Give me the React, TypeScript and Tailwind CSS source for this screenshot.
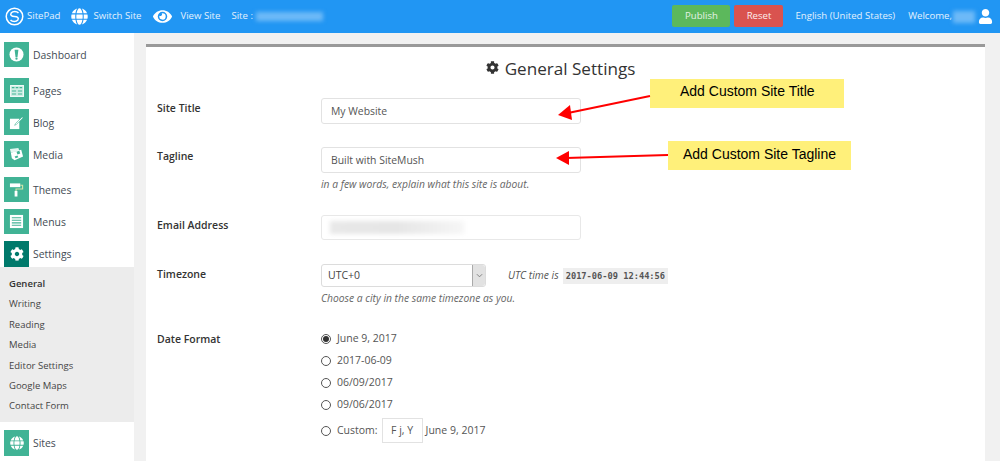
import { FaCog, FaEye, FaGlobe, FaUser } from "react-icons/fa"
import type { ReactNode } from "react"

const font = { fontFamily: '"Open Sans", sans-serif' }

function Dashboard() {
  return (
    <svg viewBox="0 0 16 16" className="w-[15px] h-[15px]">
      <circle cx="8" cy="8" r="7.5" fill="#fff" />
      <path d="M6 3h4l-1 8H7z" fill="#41b395" />
      <circle cx="8" cy="12.500" r="1.200" fill="#41b395" />
    </svg>
  )
}

function PagesIcon() {
  return (
    <svg viewBox="0 0 16 14" className="w-[14px] h-[12px]">
      <rect x="0.5" y="0.5" width="15" height="13" fill="#cfeee5" stroke="#fff" />
      <path d="M2 3h3M6.500 3h3M11 3h3M2 7h5M9 7h5M2 10.500h5M9 10.500h5" stroke="#41b395" strokeWidth="1.400" />
    </svg>
  )
}

function BlogIcon() {
  return (
    <svg viewBox="0 0 16 16" className="w-[15px] h-[15px]">
      <path d="M1 4h10v11H1z" fill="#fff" />
      <path d="M7 9l7-7 1 1-7 7-2 1z" fill="#fff" stroke="#41b395" strokeWidth="0.600" />
    </svg>
  )
}

function MediaIcon() {
  return (
    <svg viewBox="0 0 16 16" className="w-[15px] h-[15px]">
      <path d="M1 2l9-1 1 3-9 2z" fill="#e4f6f0" />
      <path d="M2 6l11-3 2 7-9 4-3-2z" fill="#fff" />
      <path d="M8 5l3-1 1 3-3 1zM6 10l3-1 1 2-3 1z" fill="#41b395" />
    </svg>
  )
}

function RollerIcon() {
  return (
    <svg viewBox="0 0 16 16" className="w-[15px] h-[15px]">
      <rect x="1" y="1.500" width="11" height="4" fill="#fff" />
      <path d="M12 3.500h2.500v4H7.500V10" fill="none" stroke="#cfe3a8" strokeWidth="1.200" />
      <rect x="6" y="9.500" width="3" height="6" fill="#fff" />
    </svg>
  )
}

function MenusIcon() {
  return (
    <svg viewBox="0 0 16 16" className="w-[15px] h-[15px]">
      <rect x="1" y="1" width="14" height="14" fill="#fff" />
      <path d="M3 4h10M3 6.700h10M3 9.400h10M3 12h10" stroke="#41b395" strokeWidth="1.200" />
    </svg>
  )
}

function Logo() {
  return (
    <svg viewBox="0 0 20 20" className="w-[19px] h-[19px] shrink-0">
      <circle cx="10" cy="10" r="8.700" fill="none" stroke="#fff" strokeWidth="1.600" />
      <path
        d="M14.200 6.400C12.300 4.300 8.200 4.300 6.500 6.400c-1.300 1.800.3 3.600 3.500 3.600 3.300 0 4.800 1.800 3.500 3.600-1.700 2.100-5.800 2.100-7.700 0"
        fill="none"
        stroke="#fff"
        strokeWidth="1.600"
      />
    </svg>
  )
}

const topItems: { label: string; icon: ReactNode; box: string; text: string; active?: boolean }[] = [
  { label: "Dashboard", icon: <Dashboard />, box: "mt-[9px] h-[25px]", text: "pt-[2px]" },
  { label: "Pages", icon: <PagesIcon />, box: "mt-[11px] h-[25px]", text: "pt-[2px]" },
  { label: "Blog", icon: <BlogIcon />, box: "mt-[6px] h-[26px]", text: "pt-[4px]" },
  { label: "Media", icon: <MediaIcon />, box: "mt-[6px] h-[26px]", text: "pt-[4px]" },
  { label: "Themes", icon: <RollerIcon />, box: "mt-[10px] h-[25px]", text: "pt-[2px]" },
  { label: "Menus", icon: <MenusIcon />, box: "mt-[7px] h-[25px]", text: "pt-[2px]" },
  {
    label: "Settings",
    icon: <FaCog className="text-white text-[14px]" />,
    box: "mt-[7px] h-[26px]",
    text: "pt-[2px]",
    active: true,
  },
]

const subItems = ["General", "Writing", "Reading", "Media", "Editor Settings", "Google Maps", "Contact Form"]

function SideItem({
  label,
  icon,
  box,
  text,
  active,
}: {
  label: string
  icon: ReactNode
  box: string
  text: string
  active?: boolean
}) {
  return (
    <div className={`flex items-center pl-[4px] ${box}`}>
      <div className={`w-[25px] h-full flex items-center justify-center ${active ? "bg-[#00796b]" : "bg-[#41b395]"}`}>
        {icon}
      </div>
      <span className={`ml-[4px] text-[10.400px] text-[#444c55] ${text}`}>{label}</span>
    </div>
  )
}

function Label({ children }: { children: ReactNode }) {
  return <div className="w-[164px] shrink-0 text-[10.500px] font-semibold text-[#333]">{children}</div>
}

function Radio({ checked, text, mt }: { checked?: boolean; text: string; mt: string }) {
  return (
    <div className={`flex items-center h-[16px] ${mt}`}>
      <span className="w-[10px] h-[10px] rounded-full border border-[#555] flex items-center justify-center">
        {checked && <span className="w-[6px] h-[6px] rounded-full bg-[#333]" />}
      </span>
      <span className="ml-[6px] text-[10.500px] text-[#555]">{text}</span>
    </div>
  )
}

export default function App() {
  return (
    <div className="relative w-[1000px] h-[461px] overflow-hidden bg-[#f1f1f1]" style={font}>
      {/* Top bar */}
      <header className="h-[33px] bg-[#2196f3] flex items-center pl-[5px] text-[9.600px] text-[#e3f1fd]">
        <Logo />
        <span className="ml-[3px]">SitePad</span>
        <FaGlobe className="ml-[11px] text-white text-[17px]" />
        <span className="ml-[5px]">Switch Site</span>
        <FaEye className="ml-[12px] text-white text-[19px]" />
        <span className="ml-[8px]">View Site</span>
        <span className="ml-[11px]">Site :</span>
        <div className="ml-[3px] w-[67px] h-[9px] bg-[#6db9f7] blur-[2px]" />
        <div className="ml-auto flex items-center">
          <div className="w-[58px] h-[22px] mb-[1px] rounded-[2px] bg-[#5cb85c] flex items-center justify-center text-[#e6f3e6]">
            Publish
          </div>
          <div className="ml-[4px] w-[49px] h-[22px] mb-[1px] rounded-[2px] bg-[#d9534f] flex items-center justify-center text-[#fdeeee]">
            Reset
          </div>
          <span className="ml-[12px]">English (United States)</span>
          <span className="ml-[13px]">Welcome,</span>
          <div className="ml-[1px] w-[22px] h-[12px] bg-[#6db9f7] blur-[2px]" />
          <FaUser className="ml-[3px] mr-[7px] text-white text-[15px]" />
        </div>
      </header>

      <div className="flex h-[428px]">
        {/* Sidebar */}
        <aside className="w-[134px] shrink-0 bg-white">
          {topItems.map((item) => (
            <SideItem key={item.label} {...item} />
          ))}
          <div className="h-[155px] bg-[#ececec] pt-[7px] pl-[9px] text-[9.500px] leading-[20.400px] text-[#444]">
            {subItems.map((s, i) => (
              <div key={s} className={i === 0 ? "font-semibold text-[#333]" : ""}>
                {s}
              </div>
            ))}
          </div>
          <SideItem
            label="Sites"
            icon={<FaGlobe className="text-white text-[14px]" />}
            box="mt-[8px] h-[26px]"
            text="pt-[2px]"
          />
        </aside>

        {/* General settings panel */}
        <main className="ml-[12px] mt-[11px] w-[839px] bg-white border-t-[3px] border-[#999] pl-[11px]">
          <h1 className="flex items-center justify-center gap-[6px] h-[20px] mt-[12px] pr-[21px] text-[17.100px] text-[#333]">
            <FaCog className="text-[13px] mb-[4px]" />
            General Settings
          </h1>
          <div className="flex items-center h-[26px] mt-[19px]">
            <Label>
              <span className="relative -top-[2px]">Site Title</span>
            </Label>
            <div className="w-[260px] h-[26px] border border-[#e2e2e2] rounded-[3px] pl-[9px] pt-[2px] flex items-center text-[10.400px] text-[#555]">
              My Website
            </div>
          </div>
          <div className="flex items-center h-[26px] mt-[23px]">
            <Label>
              <span className="relative -top-[3px]">Tagline</span>
            </Label>
            <div className="w-[260px] h-[26px] border border-[#e2e2e2] rounded-[3px] pl-[9px] pt-[2px] flex items-center text-[10.400px] text-[#555]">
              Built with SiteMush
            </div>
          </div>
          <p className="ml-[164px] mt-[4px] h-[14px] leading-[14px] text-[10.300px] italic text-[#666]">
            in a few words, explain what this site is about.
          </p>
          <div className="flex items-center h-[25px] mt-[24px]">
            <Label>
              <span className="relative -top-[2px]">Email Address</span>
            </Label>
            <div className="w-[260px] h-[25px] border border-[#e8e8e8] rounded-[3px] pl-[8px] flex items-center">
              <div className="w-[134px] h-[13px] bg-linear-to-r from-[#e8e8e8] via-[#e6e6e6] to-[#f6f6f6] blur-[2px]" />
            </div>
          </div>
          <div className="flex items-center h-[23px] mt-[24px]">
            <Label>
              <span className="relative -top-[1px]">Timezone</span>
            </Label>
            <div className="w-[165px] h-[23px] border border-[#dcdcdc] rounded-[3px] pl-[6px] flex items-center justify-between text-[10.500px] text-[#444]">
              UTC+0
              <div className="w-[13px] h-full bg-[#e2e2e2] border-l border-[#aaa] rounded-r-[3px] flex items-center justify-center">
                <svg viewBox="0 0 8 5" className="w-[7px] h-[5px]">
                  <path d="M1 1l3 3 3-3" fill="none" stroke="#777" strokeWidth="1" />
                </svg>
              </div>
            </div>
            <span className="ml-[22px] text-[10.300px] italic text-[#555]">UTC time is</span>
            <code
              className="ml-[4px] px-[3px] h-[16px] leading-[16px] bg-[#eee] text-[8.700px] font-bold text-[#555]"
              style={{ fontFamily: '"DejaVu Sans Mono", monospace' }}
            >
              2017-06-09 12:44:56
            </code>
          </div>
          <p className="ml-[164px] mt-[4px] h-[14px] leading-[14px] text-[10.300px] italic text-[#666]">
            Choose a city in the same timezone as you.
          </p>
          <div className="flex mt-[25px]">
            <Label>
              <span className="relative top-[2px]">Date Format</span>
            </Label>
            <div className="pt-[1px]">
              <Radio checked text="June 9, 2017" mt="mt-0" />
              <Radio text="2017-06-09" mt="mt-[6px]" />
              <Radio text="06/09/2017" mt="mt-[6px]" />
              <Radio text="09/06/2017" mt="mt-[6px]" />
              <div className="flex items-center h-[25px] mt-[5px] text-[10.500px] text-[#555]">
                <span className="w-[10px] h-[10px] rounded-full border border-[#555]" />
                <span className="ml-[6px]">Custom:</span>
                <div className="ml-[4px] w-[41px] h-[25px] border border-[#e2e2e2] flex items-center justify-center">
                  F j, Y
                </div>
                <span className="ml-[3px]">June 9, 2017</span>
              </div>
            </div>
          </div>
        </main>
      </div>

      {/* Annotations laid over the screenshot */}
      <div
        className="absolute left-[650px] top-[79px] w-[194px] h-[29px] bg-[#fff07a] pl-[30px] pt-[2px] text-[14px] text-black"
        style={{ fontFamily: '"Liberation Sans", sans-serif' }}
      >
        Add Custom Site Title
      </div>
      <div
        className="absolute left-[668px] top-[141px] w-[183px] h-[29px] bg-[#fff07a] pl-[15px] pt-[3px] text-[14px] text-black"
        style={{ fontFamily: '"Liberation Sans", sans-serif' }}
      >
        Add Custom Site Tagline
      </div>
      <svg className="absolute left-0 top-0 w-[1000px] h-[461px] pointer-events-none" viewBox="0 0 1000 461">
        <path d="M650 96L568 113" stroke="#f00" strokeWidth="2" />
        <path d="M558 115L570 105L572 120Z" fill="#f00" />
        <path d="M668 155L566 158" stroke="#f00" strokeWidth="2" />
        <path d="M556 158L569 151L569 165Z" fill="#f00" />
      </svg>
    </div>
  )
}
